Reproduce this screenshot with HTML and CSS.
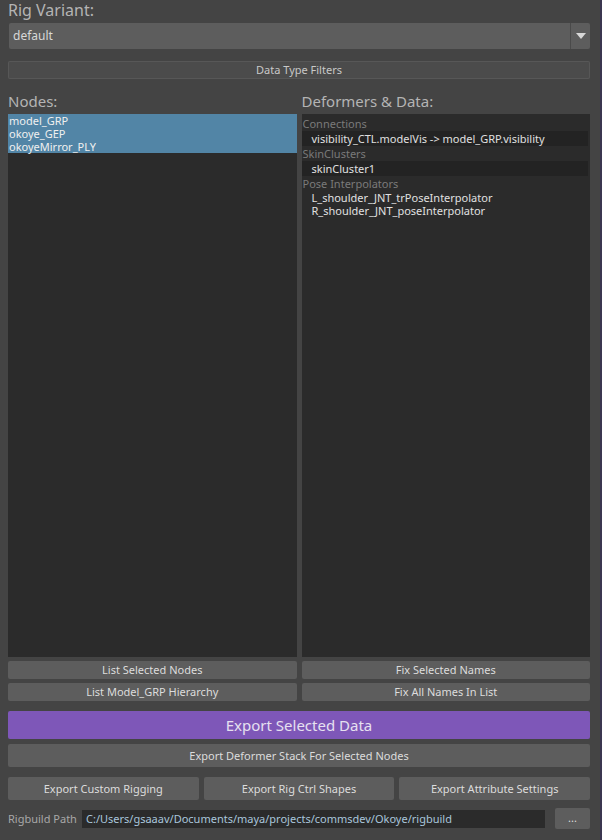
FILE: index.html
```
<!DOCTYPE html>
<html>
<head>
<meta charset="utf-8">
<link rel="stylesheet" href="styles.css">
</head>
<body>
<div class="win">
  <div class="title">Rig Variant:</div>
  <div class="combo">
    <div class="combo-text">default</div>
    <div class="combo-arrow"><svg width="10" height="6" viewBox="0 0 10 6"><path d="M0 0 L10 0 L5 6 Z" fill="#d8d8d8"/></svg></div>
  </div>
  <div class="btn filters">Data Type Filters</div>
  <div class="panes">
    <div class="pane">
      <div class="title">Nodes:</div>
      <div class="list">
        <div class="row sel">model_GRP</div>
        <div class="row sel">okoye_GEP</div>
        <div class="row sel">okoyeMirror_PLY</div>
      </div>
    </div>
    <div class="splitter"></div>
    <div class="pane">
      <div class="title">Deformers &amp; Data:</div>
      <div class="list data">
        <div class="hdr">Connections</div>
        <div class="item">visibility_CTL.modelVis -&gt; model_GRP.visibility</div>
        <div class="hdr">SkinClusters</div>
        <div class="item">skinCluster1</div>
        <div class="hdr">Pose Interpolators</div>
        <div class="item plain">L_shoulder_JNT_trPoseInterpolator</div>
        <div class="item plain">R_shoulder_JNT_poseInterpolator</div>
      </div>
    </div>
  </div>
  <div class="grid2">
    <div class="btn">List Selected Nodes</div>
    <div class="btn">Fix Selected Names</div>
    <div class="btn">List Model_GRP Hierarchy</div>
    <div class="btn">Fix All Names In List</div>
  </div>
  <div class="btn export">Export Selected Data</div>
  <div class="btn stack">Export Deformer Stack For Selected Nodes</div>
  <div class="grid3">
    <div class="btn">Export Custom Rigging</div>
    <div class="btn">Export Rig Ctrl Shapes</div>
    <div class="btn">Export Attribute Settings</div>
  </div>
  <div class="pathrow">
    <div class="plabel">Rigbuild Path</div>
    <div class="pinput">C:/Users/gsaaav/Documents/maya/projects/commsdev/Okoye/rigbuild</div>
    <div class="btn dots">...</div>
  </div>
</div>
</body>
</html>
```
FILE: styles.css
```
html, body {
  margin: 0;
  padding: 0;
  background: #444444;
}
body {
  width: 602px;
  height: 840px;
  overflow: hidden;
  font-family: "Noto Sans", "Open Sans", sans-serif;
  font-size: 11px;
  color: #d6d6d6;
}
.win {
  box-sizing: border-box;
  width: 602px;
  height: 840px;
  padding: 0 10px 0 8px;
  border-right: 2px solid #3b3650;
  display: flex;
  flex-direction: column;
}
.title {
  font-size: 16px;
  line-height: 21px;
  color: #b4b4b4;
  height: 21px;
}
.combo {
  margin: 2px 0 0 1px;
  height: 26px;
  display: flex;
  background: #5d5d5d;
  border-radius: 2px;
}
.combo-text {
  flex: 1;
  padding-left: 4px;
  line-height: 26px;
  font-size: 12px;
  color: #d8d8d8;
}
.combo-arrow {
  width: 19px;
  border-left: 1px solid #4a4a4a;
  display: flex;
  align-items: center;
  justify-content: center;
}
.btn {
  background: #5d5d5d;
  text-align: center;
  color: #dcdcdc;
  font-size: 11px;
  border-radius: 2px;
}
.filters {
  margin-top: 12px;
  height: 18px;
  line-height: 18px;
  background: #4b4b4b;
  box-shadow: inset 0 0 0 1px #575757;
  color: #c8c8c8;
}
.panes {
  margin-top: 12px;
  display: flex;
  height: 566px;
}
.pane {
  flex: 1;
  display: flex;
  flex-direction: column;
}
.pane .title {
  font-size: 15px;
  height: 23px;
  line-height: 20px;
}
.splitter {
  width: 5px;
}
.list {
  flex: 1;
  background: #2b2b2b;
}
.list.data {
  padding-top: 2px;
}
.row {
  height: 13px;
  line-height: 13px;
  padding-left: 1px;
  color: #f0f0f0;
}
.row.sel {
  background: #5285a6;
}
.hdr {
  height: 15px;
  line-height: 15px;
  padding-left: 1px;
  color: #7a7a7a;
}
.item {
  height: 15px;
  line-height: 15px;
  padding-left: 10px;
  margin-right: 2px;
  background: #232323;
  color: #e0e0e0;
}
.item.plain {
  background: transparent;
  height: 13px;
  line-height: 13px;
}
.grid2 {
  margin-top: 4px;
  display: grid;
  grid-template-columns: 1fr 1fr;
  column-gap: 5px;
  row-gap: 4px;
}
.grid2 .btn {
  height: 18px;
  line-height: 18px;
}
.export {
  margin-top: 10px;
  height: 28px;
  line-height: 28px;
  background: #7e57b8;
  font-size: 15px;
  color: #e6e0f0;
}
.stack {
  margin-top: 5px;
  height: 23px;
  line-height: 23px;
}
.grid3 {
  margin-top: 10px;
  display: grid;
  grid-template-columns: 1fr 1fr 1fr;
  column-gap: 5px;
}
.grid3 .btn {
  height: 23px;
  line-height: 23px;
}
.pathrow {
  margin-top: 8px;
  display: flex;
  align-items: center;
  height: 21px;
}
.plabel {
  width: 74px;
  color: #a8a8a8;
}
.pinput {
  flex: 1;
  height: 18px;
  line-height: 18px;
  background: #2b2b2b;
  color: #a9c6dc;
  padding-left: 4px;
}
.dots {
  margin-left: 10px;
  width: 35px;
  height: 21px;
  line-height: 19px;
}
```
